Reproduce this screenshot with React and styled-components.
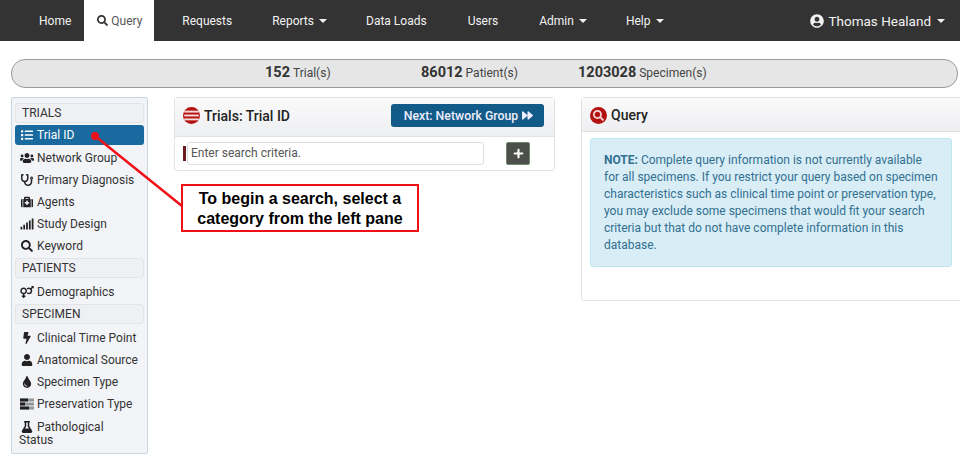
import React from 'react';
import styled, { createGlobalStyle } from 'styled-components';
import { FaSearch, FaList, FaUsers, FaStethoscope, FaMedkit, FaSignal, FaVenusMars, FaBolt, FaUser, FaTint, FaFlask, FaForward, FaPlus, FaUserCircle } from 'react-icons/fa';

const Global = createGlobalStyle`
  html, body { margin: 0; padding: 0; background: #fff; }
  body { font-family: Roboto, "Liberation Sans", sans-serif; color: #333; width: 960px; height: 461px; overflow: hidden; position: relative; }
  * { box-sizing: border-box; }
`;

const Nav = styled.nav`
  height: 41px; background: #333; display: flex; align-items: stretch; color: #f2f2f2; font-size: 12px;
`;
const NavItem = styled.div`
  display: flex; align-items: center; gap: 3px;
  margin-left: ${p => p.$left}px;
  white-space: nowrap;
`;
const ActiveTab = styled.div`
  display: flex; align-items: center; gap: 3px; width: 70px; padding-left: 13px; margin-left: 13px;
  background: #fff; color: #555;
  svg { color: #333; font-size: 11px; }
`;
const Caret = styled.span`
  display: inline-block; width: 0; height: 0; margin-left: 2px;
  border-left: 4px solid transparent; border-right: 4px solid transparent; border-top: 4px solid currentColor;
`;
const UserItem = styled.div`
  margin-left: auto; margin-right: 15px; display: flex; align-items: center; gap: 4px; font-size: 13.5px;
  svg { font-size: 14px; }
`;
const Stats = styled.div`
  margin: 18px 2px 0 11px; height: 29px; border: 1px solid #999; border-radius: 14px; background: #e6e6e6;
  display: flex; align-items: center; padding: 0 0 2px 253px;
`;
const Stat = styled.div`
  width: ${p => p.$w}px; font-size: 12px; color: #444; white-space: nowrap;
  b { font-size: 14.5px; color: #333; font-weight: 700; margin-right: 3px; }
`;
const Main = styled.div`
  display: flex; align-items: flex-start; margin-top: 9px; padding-left: 11px;
`;
const Side = styled.aside`
  width: 137px; height: 357px; background: #f2f4f8; border: 1px solid #c9d5e0; border-radius: 2px; padding: 5px 3px; flex: none;
`;
const SideHead = styled.div`
  height: 20px; line-height: 19px; padding-left: 6px; font-size: 12px; color: #333;
  background: #eff0f3; border: 1px solid #e3e4e8; border-radius: 3px; margin-bottom: ${p => p.$mb ?? 4}px;
`;
const SideItem = styled.div`
  height: 20px; margin-bottom: ${p => p.$active ? 3 : 2}px; padding-left: 5px; line-height: 20px; font-size: 12px;
  white-space: nowrap;
  color: ${p => p.$active ? '#fff' : '#333'};
  background: ${p => p.$active ? '#1a6aa0' : 'transparent'};
  border-radius: 3px;
  svg { width: 14px; height: 12px; margin-right: 3px; vertical-align: -2px; color: ${p => p.$active ? '#fff' : '#222'}; }
`;
const WrapItem = styled(SideItem)`
  height: auto; white-space: normal; line-height: 13px; padding: 5px 20px 0 4px; text-indent: 1px;
`;
const Center = styled.section`
  width: 381px; margin-left: 26px; border: 1px solid #e3e3e3; border-radius: 3px; flex: none;
`;
const PanelHead = styled.div`
  height: ${p => p.$h}px; background: linear-gradient(#fafafa, #eeeff2); border-bottom: 1px solid #e3e3e3;
  display: flex; align-items: center; padding: ${p => p.$pt ?? 0}px 10px ${p => p.$pb ?? 0}px 8px;
  font-size: 14px; font-weight: 500; color: #222;
`;
const Badge = styled.span`
  width: 17px; height: 17px; border-radius: 50%; background: #b3120e; color: #f4d9d9; margin-right: 4px;
  display: inline-flex; align-items: center; justify-content: center; flex: none;
  svg { font-size: 11px; }
`;
const NextButton = styled.button`
  margin-left: auto; width: 153px; height: 23px; border: 0; border-radius: 3px; background: #125a88; color: #eef; padding: 0 0 0 2px;
  font: 500 12.3px Roboto, sans-serif; display: flex; align-items: center; justify-content: center; gap: 4px;
  svg { font-size: 11px; }
`;
const SearchRow = styled.div`
  height: 33px; display: flex; align-items: center; padding-left: 8px;
`;
const Marker = styled.span`
  width: 3px; height: 15px; background: #6b1a1e; flex: none; margin-right: 1px;
`;
const SearchInput = styled.div`
  width: 297px; height: 23px; border: 1px solid #ddd; border-radius: 3px; padding-left: 3px;
  font-size: 12px; line-height: 21px; color: #555;
`;
const PlusButton = styled.div`
  width: 24px; height: 23px; margin-left: 22px; background: #4d4f4b; border: 1px solid #6f8a6b; border-radius: 2px; color: #fff;
  display: flex; align-items: center; justify-content: center;
  svg { font-size: 11px; }
`;
const RightPanel = styled.section`
  flex: 1; height: 204px; margin-left: 26px; margin-right: -2px; border: 1px solid #e3e3e3; border-radius: 3px;
`;
const Alert = styled.div`
  width: 362px; height: 129px; margin: 6px 0 0 8px; padding: 13px 13px; border: 1px solid #bce8f1; border-radius: 3px; background: #d9edf7;
  color: #31708f; font-size: 12px; line-height: 17px;
`;
const Arrow = styled.svg`
  position: absolute; left: 0; top: 0; pointer-events: none;
`;
const Callout = styled.div`
  position: absolute; left: 181px; top: 184px; width: 238px; height: 48px; border: 2px solid #f01018; background: #fff;
  font: 700 16px/20px "Liberation Sans", Arial, sans-serif; color: #000; text-align: center; padding-top: 3px;
`;

const StripeIcon = () => (
  <svg viewBox="0 0 14 14" fill="currentColor">
    <rect x="1" y="3" width="12" height="1.6" /><rect x="1" y="6.2" width="12" height="1.6" /><rect x="1" y="9.4" width="12" height="1.6" />
  </svg>
);
const RackIcon = () => (
  <svg viewBox="0 0 14 12" fill="currentColor">
    <rect x="0" y="0.5" width="14" height="3" opacity=".45" /><rect x="0" y="0.5" width="8" height="3" />
    <rect x="0" y="4.5" width="14" height="3" opacity=".45" /><rect x="0" y="4.5" width="5" height="3" />
    <rect x="0" y="8.5" width="14" height="3" opacity=".45" /><rect x="0" y="8.5" width="9" height="3" />
  </svg>
);

export default function App() {
  return (
    <>
      <Global />
      <Nav>
        <NavItem $left={39}>Home</NavItem>
        <ActiveTab><FaSearch />Query</ActiveTab>
        <NavItem $left={28}>Requests</NavItem>
        <NavItem $left={40}>Reports <Caret /></NavItem>
        <NavItem $left={39}>Data Loads</NavItem>
        <NavItem $left={41}>Users</NavItem>
        <NavItem $left={41}>Admin <Caret /></NavItem>
        <NavItem $left={39}>Help <Caret /></NavItem>
        <UserItem><FaUserCircle />Thomas Healand <Caret /></UserItem>
      </Nav>
      <Stats>
        <Stat $w={156}><b>152</b>Trial(s)</Stat>
        <Stat $w={157}><b>86012</b>Patient(s)</Stat>
        <Stat><b>1203028</b>Specimen(s)</Stat>
      </Stats>
      <Main>
        <Side>
          <SideHead $mb={2}>TRIALS</SideHead>
          <SideItem $active><FaList />Trial ID</SideItem>
          <SideItem><FaUsers />Network Group</SideItem>
          <SideItem><FaStethoscope />Primary Diagnosis</SideItem>
          <SideItem><FaMedkit />Agents</SideItem>
          <SideItem><FaSignal />Study Design</SideItem>
          <SideItem><FaSearch />Keyword</SideItem>
          <SideHead>PATIENTS</SideHead>
          <SideItem><FaVenusMars />Demographics</SideItem>
          <SideHead>SPECIMEN</SideHead>
          <SideItem><FaBolt />Clinical Time Point</SideItem>
          <SideItem><FaUser />Anatomical Source</SideItem>
          <SideItem><FaTint />Specimen Type</SideItem>
          <SideItem><RackIcon />Preservation Type</SideItem>
          <WrapItem><FaFlask />Pathological Status</WrapItem>
        </Side>
        <Center>
          <PanelHead $h={39} $pb={3}>
            <Badge><StripeIcon /></Badge>Trials: Trial ID
            <NextButton>Next: Network Group <FaForward /></NextButton>
          </PanelHead>
          <SearchRow>
            <Marker />
            <SearchInput>Enter search criteria.</SearchInput>
            <PlusButton><FaPlus /></PlusButton>
          </SearchRow>
        </Center>
        <RightPanel>
          <PanelHead $h={34} $pt={1}>
            <Badge><FaSearch /></Badge>Query
          </PanelHead>
          <Alert><b>NOTE:</b> Complete query information is not currently available for all specimens. If you restrict your query based on specimen characteristics such as clinical time point or preservation type, you may exclude some specimens that would fit your search criteria but that do not have complete information in this database.</Alert>
        </RightPanel>
      </Main>
      <Arrow width="960" height="461">
        <circle cx="95" cy="136" r="4" fill="#f01018" />
        <line x1="95" y1="136" x2="182" y2="206" stroke="#f01018" strokeWidth="2.5" />
      </Arrow>
      <Callout>To begin a search, select a<br />category from the left pane</Callout>
    </>
  );
}
